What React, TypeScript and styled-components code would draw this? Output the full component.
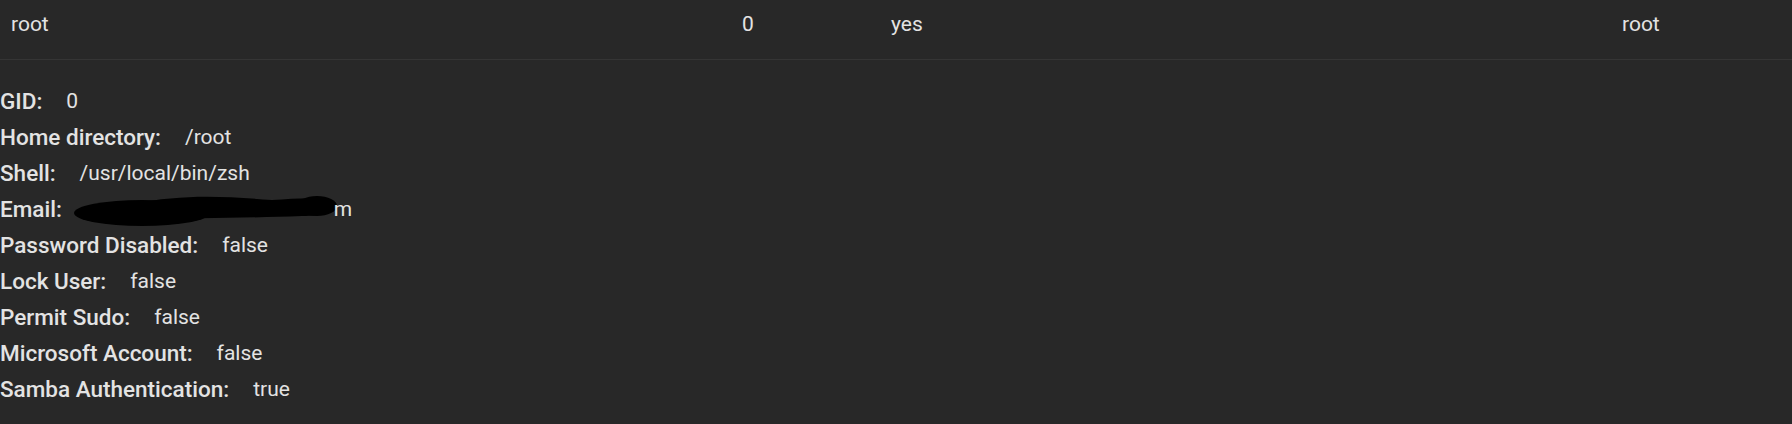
import React from "react";
import styled, { createGlobalStyle } from "styled-components";

const GlobalStyle = createGlobalStyle`
  html, body {
    margin: 0;
    padding: 0;
    background: #282828;
  }
  body {
    font-family: Roboto, "Noto Sans", sans-serif;
    color: #e3e3e3;
  }
`;

const Page = styled.div`
  width: 1792px;
  height: 424px;
  background: #282828;
  overflow: hidden;
`;

const UserRow = styled.div`
  display: grid;
  grid-template-columns: 731px 149px 731px 1fr;
  height: 59px;
  align-items: center;
  border-bottom: 1px solid #353535;
`;

const Cell = styled.div`
  padding-left: 11px;
  font-size: 21px;
  padding-bottom: 12px;
`;

const Details = styled.div`
  padding-top: 23px;
  display: flex;
  flex-direction: column;
`;

const Line = styled.div`
  display: flex;
  align-items: center;
  height: 36px;
`;

const Label = styled.span`
  font-size: 22.5px;
  font-weight: 500;
  margin-right: 24px;
`;

const Value = styled.span`
  font-size: 21px;
  font-weight: 400;
  display: inline-flex;
  align-items: center;
`;

const Redacted = styled.svg`
  margin-left: -14px;
  margin-right: -4px;
`;

const details: [string, string][] = [
  ["GID:", "0"],
  ["Home directory:", "/root"],
  ["Shell:", "/usr/local/bin/zsh"],
  ["Email:", ""],
  ["Password Disabled:", "false"],
  ["Lock User:", "false"],
  ["Permit Sudo:", "false"],
  ["Microsoft Account:", "false"],
  ["Samba Authentication:", "true"],
];

function EmailValue() {
  return (
    <Value>
      <Redacted width="266" height="34" viewBox="0 0 266 34">
        <ellipse cx="70" cy="21" rx="68" ry="13" fill="#000" />
        <path
          d="M60 12 C 110 2, 150 4, 200 8 C 230 6, 255 4, 262 12 C 266 20, 255 24, 230 24 C 180 26, 120 26, 80 28 Z"
          fill="#000"
        />
        <ellipse cx="245" cy="14" rx="20" ry="10" fill="#000" />
      </Redacted>
      m
    </Value>
  );
}

export default function App() {
  return (
    <Page>
      <GlobalStyle />
      <UserRow>
        <Cell>root</Cell>
        <Cell>0</Cell>
        <Cell>yes</Cell>
        <Cell>root</Cell>
      </UserRow>
      <Details>
        {details.map(([label, value]) => (
          <Line key={label}>
            <Label>{label}</Label>
            {label === "Email:" ? <EmailValue /> : <Value>{value}</Value>}
          </Line>
        ))}
      </Details>
    </Page>
  );
}
